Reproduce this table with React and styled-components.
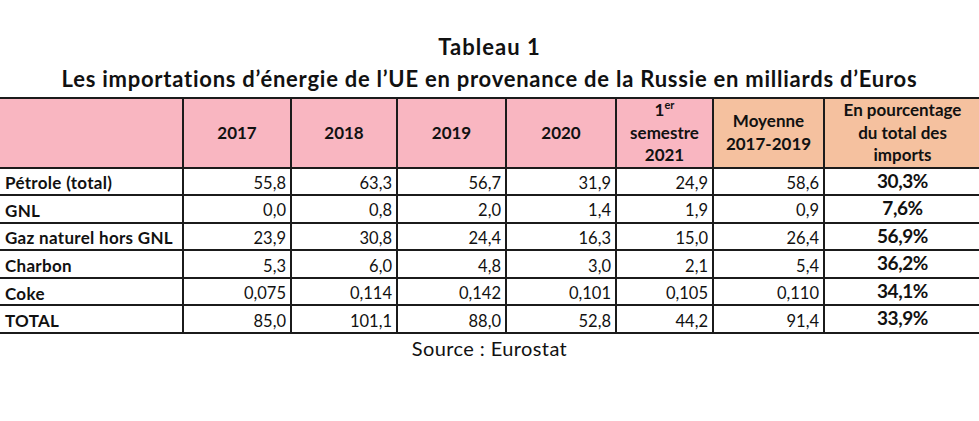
import styled, { createGlobalStyle } from "styled-components";

const GlobalStyle = createGlobalStyle`
  html, body {
    margin: 0;
    padding: 0;
    background: #ffffff;
    overflow: hidden;
  }
  body {
    font-family: Lato, "Liberation Sans", sans-serif;
    color: #111;
  }
`;

const Page = styled.div`
  width: 979px;
  height: 421px;
  padding-top: 31px;
  box-sizing: border-box;
`;

const Title = styled.h1`
  margin: 0;
  text-align: center;
  font-size: 22px;
  font-weight: 700;
  line-height: 32px;
  letter-spacing: ${(p) => p.$spacing || "0.75px"};
`;

const Table = styled.table`
  border-collapse: collapse;
  table-layout: fixed;
  width: 982px;
  margin-left: -1px;
  margin-top: 2px;
`;

const HeadCell = styled.th`
  background: ${(p) => (p.$orange ? "#f5c19f" : "#f9b6c1")};
  border: 2px solid #1b1b1b;
  border-left: ${(p) => (p.$first ? "none" : "2px solid #1b1b1b")};
  height: 65px;
  padding: 0 4px;
  font-size: 17px;
  font-weight: 700;
  line-height: 22.5px;
  text-align: center;
  vertical-align: middle;
  sup {
    font-size: 11px;
    line-height: 0;
  }
`;

const LabelCell = styled.td`
  border: 2px solid #1b1b1b;
  border-left: none;
  height: 22.6px;
  padding: 3px 6px 0;
  font-size: 17px;
  font-weight: 700;
  letter-spacing: 0.3px;
  text-align: left;
  white-space: nowrap;
`;

const NumCell = styled.td`
  border: 2px solid #1b1b1b;
  height: 22.6px;
  padding: 3px 4px 0 0;
  font-size: 16.5px;
  text-align: right;
`;

const PctCell = styled.td`
  border: 2px solid #1b1b1b;
  height: 22.6px;
  padding: 0;
  font-size: 19px;
  font-weight: 700;
  letter-spacing: -0.4px;
  text-align: center;
  vertical-align: top;
`;

const Source = styled.p`
  margin: 2px 0 0;
  text-align: center;
  font-size: 20px;
  letter-spacing: 0.4px;
`;

const rows = [
  ["Pétrole (total)", "55,8", "63,3", "56,7", "31,9", "24,9", "58,6", "30,3%"],
  ["GNL", "0,0", "0,8", "2,0", "1,4", "1,9", "0,9", "7,6%"],
  ["Gaz naturel hors GNL", "23,9", "30,8", "24,4", "16,3", "15,0", "26,4", "56,9%"],
  ["Charbon", "5,3", "6,0", "4,8", "3,0", "2,1", "5,4", "36,2%"],
  ["Coke", "0,075", "0,114", "0,142", "0,101", "0,105", "0,110", "34,1%"],
  ["TOTAL", "85,0", "101,1", "88,0", "52,8", "44,2", "91,4", "33,9%"],
];

const widths = [184, 108, 106, 109, 110, 97, 111, 157];

export default function App() {
  return (
    <Page>
      <GlobalStyle />
      <Title $spacing="1px">Tableau 1</Title>
      <Title>Les importations d’énergie de l’UE en provenance de la Russie en milliards d’Euros</Title>
      <Table>
        <colgroup>
          {widths.map((w, i) => (
            <col key={i} style={{ width: w }} />
          ))}
        </colgroup>
        <thead>
          <tr>
            <HeadCell $first />
            <HeadCell>2017</HeadCell>
            <HeadCell>2018</HeadCell>
            <HeadCell>2019</HeadCell>
            <HeadCell>2020</HeadCell>
            <HeadCell>
              1<sup>er</sup>
              <br />
              semestre
              <br />
              2021
            </HeadCell>
            <HeadCell $orange>
              Moyenne
              <br />
              2017-2019
            </HeadCell>
            <HeadCell $orange>
              En pourcentage
              <br />
              du total des
              <br />
              imports
            </HeadCell>
          </tr>
        </thead>
        <tbody>
          {rows.map((r) => (
            <tr key={r[0]}>
              <LabelCell>{r[0]}</LabelCell>
              {r.slice(1, 7).map((v, i) => (
                <NumCell key={i}>{v}</NumCell>
              ))}
              <PctCell>{r[7]}</PctCell>
            </tr>
          ))}
        </tbody>
      </Table>
      <Source>Source : Eurostat</Source>
    </Page>
  );
}
